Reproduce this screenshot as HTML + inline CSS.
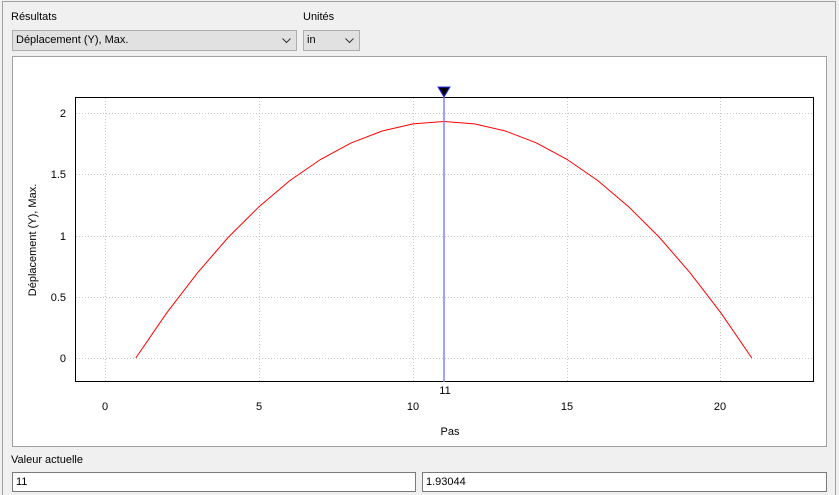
<!DOCTYPE html>
<html><head><meta charset="utf-8"><style>
body{margin:0;width:839px;height:495px;background:#f0f0f0;font-family:"Liberation Sans",sans-serif;font-size:11px;color:#000;position:relative;overflow:hidden}
.a{position:absolute}
.combo{position:absolute;background:#e1e1e1;border:1px solid #adadad;box-sizing:border-box;height:21px;line-height:19px;padding-left:3px}
.box{position:absolute;background:#fff;border:1px solid #7a7a7a;box-sizing:border-box;height:20px;line-height:18px;padding-left:3px}
</style></head><body>
<div class="a" style="left:2px;top:1px;width:834px;height:494px;border:1px solid #a0a0a0;border-bottom:none;box-sizing:border-box"></div>
<div class="a" style="left:11px;top:11px">Résultats</div>
<div class="a" style="left:303px;top:11px">Unités</div>
<div class="combo" style="left:12px;top:30px;width:285px">Déplacement (Y), Max.<svg class="a" style="right:5px;top:7px" width="9" height="6"><path d="M0.5 0.5L4.5 4.5L8.5 0.5" fill="none" stroke="#333"/></svg></div>
<div class="combo" style="left:303px;top:30px;width:57px">in<svg class="a" style="right:5px;top:7px" width="9" height="6"><path d="M0.5 0.5L4.5 4.5L8.5 0.5" fill="none" stroke="#333"/></svg></div>
<svg class="a" style="left:12px;top:56px" width="815" height="391">
<rect x="0.5" y="0.5" width="814" height="390" fill="#fff" stroke="#a0a0a0"/>
<g transform="translate(-12,-56)" font-family="Liberation Sans" font-size="11">
<g stroke="#c8c8c8" stroke-dasharray="1,2">
<line x1="105.5" y1="98" x2="105.5" y2="382"/><line x1="259.5" y1="98" x2="259.5" y2="382"/><line x1="413.5" y1="98" x2="413.5" y2="382"/><line x1="567.5" y1="98" x2="567.5" y2="382"/><line x1="720.5" y1="98" x2="720.5" y2="382"/>
<line x1="76" y1="113.5" x2="813" y2="113.5"/><line x1="76" y1="174.5" x2="813" y2="174.5"/><line x1="76" y1="236.5" x2="813" y2="236.5"/><line x1="76" y1="297.5" x2="813" y2="297.5"/><line x1="76" y1="358.5" x2="813" y2="358.5"/>
</g>
<rect x="75.5" y="97.5" width="738" height="284" fill="none" stroke="#000"/>
<polyline fill="none" stroke="#f00" points="135.8,358 166.6,313.1 197.4,272.9 228.2,237.4 259,206.7 289.8,180.6 320.6,159.4 351.4,142.8 382.2,131 413,123.9 443.8,121.5 474.6,123.9 505.4,131 536.2,142.8 567,159.4 597.8,180.6 628.6,206.7 659.4,237.4 690.2,272.9 721,313.1 751.8,358"/>
<line x1="444" y1="92" x2="444" y2="382" stroke="#8080ff" stroke-width="1.5"/>
<path d="M438 87L450 87L444 97Z" fill="#000" stroke="#3030ff"/>
<g text-anchor="end"><text x="66" y="117">2</text><text x="66" y="178">1.5</text><text x="66" y="240">1</text><text x="66" y="301">0.5</text><text x="66" y="362">0</text></g>
<g text-anchor="middle"><text x="105" y="410">0</text><text x="259" y="410">5</text><text x="413" y="410">10</text><text x="567" y="410">15</text><text x="720" y="410">20</text><text x="445" y="394">11</text><text x="450" y="435">Pas</text></g>
<text transform="translate(36,240) rotate(-90)" text-anchor="middle">Déplacement (Y), Max.</text>
</g></svg>
<div class="a" style="left:11px;top:454px">Valeur actuelle</div>
<div class="box" style="left:12px;top:472px;width:404px">11</div>
<div class="box" style="left:422px;top:472px;width:405px">1.93044</div>
</body></html>
